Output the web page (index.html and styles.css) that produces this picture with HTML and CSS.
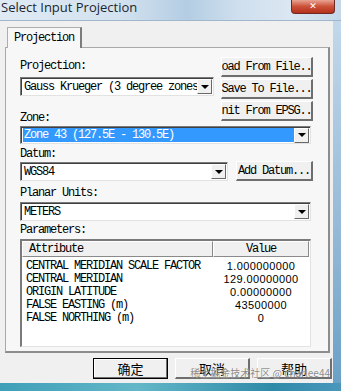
FILE: index.html
```html
<!DOCTYPE html>
<html lang="en">

<head>
    <meta charset="UTF-8">
    <title>Select Input Projection</title>
    <link rel="stylesheet" href="styles.css">
</head>

<body>
    <div class="window">
        <div class="titlebar">
            <span class="title">Select Input Projection</span>
            <span class="close">&#x2715;</span>
        </div>
        <div class="main">
            <div class="client">
                <div class="tabs">
                    <div class="tab">Projection</div>
                </div>
                <div class="panel">
                    <div class="top-row">
                        <div class="top-left">
                            <div class="label">Projection:</div>
                            <div class="combo combo-proj">
                                <span class="combo-text">Gauss Krueger (3 degree zones)</span>
                                <span class="arrow"></span>
                            </div>
                            <div class="label label-zone">Zone:</div>
                        </div>
                        <div class="side-buttons">
                            <button class="btn btn-side">Load From File...</button>
                            <button class="btn btn-side">Save To File...</button>
                            <button class="btn btn-side">Init From EPSG...</button>
                        </div>
                    </div>

                    <div class="combo combo-wide combo-zone">
                        <span class="combo-text selected">Zone 43 (127.5E - 130.5E)</span>
                        <span class="arrow"></span>
                    </div>

                    <div class="label">Datum:</div>
                    <div class="datum-row">
                        <div class="combo combo-datum">
                            <span class="combo-text">WGS84</span>
                            <span class="arrow"></span>
                        </div>
                        <button class="btn btn-datum">Add Datum...</button>
                    </div>

                    <div class="label">Planar Units:</div>
                    <div class="combo combo-wide combo-units">
                        <span class="combo-text">METERS</span>
                        <span class="arrow"></span>
                    </div>

                    <div class="label">Parameters:</div>
                    <div class="listview">
                        <div class="lv-head">
                            <div class="col-attr">Attribute</div>
                            <div class="col-val">Value</div>
                        </div>
                        <div class="lv-row"><div class="col-attr">CENTRAL MERIDIAN SCALE FACTOR</div><div class="col-val num">1.000000000</div></div>
                        <div class="lv-row"><div class="col-attr">CENTRAL MERIDIAN</div><div class="col-val num">129.00000000</div></div>
                        <div class="lv-row"><div class="col-attr">ORIGIN LATITUDE</div><div class="col-val num">0.00000000</div></div>
                        <div class="lv-row"><div class="col-attr">FALSE EASTING (m)</div><div class="col-val num">43500000</div></div>
                        <div class="lv-row"><div class="col-attr">FALSE NORTHING (m)</div><div class="col-val num">0</div></div>
                    </div>
                </div>

                <div class="footer">
                    <button class="btn btn-foot btn-default">确定</button>
                    <button class="btn btn-foot">取消</button>
                    <button class="btn btn-foot">帮助</button>
                    <span class="watermark">稀土掘金技术社区 @ charlee44</span>
                </div>
            </div>
            <div class="frame-right"></div>
        </div>
        <div class="frame-bottom"></div>
    </div>
</body>

</html>
```

FILE: styles.css
```css
body {
    margin: 0;
    background-color: #f0f0f0;
    overflow: hidden;
}

.window {
    width: 341px;
    height: 391px;
    display: flex;
    flex-direction: column;
    font-family: "Liberation Mono", monospace;
    font-size: 12px;
    letter-spacing: -1.2px;
    color: #000;
}

.titlebar {
    height: 21px;
    flex-shrink: 0;
    display: flex;
    align-items: flex-start;
    justify-content: space-between;
    background: linear-gradient(90deg, #dfeaf4 0%, #d3e2ef 35%, #b4cde3 55%, #cfdfee 70%, #dbe7f2 85%, #c4d8ea 100%);
    border-bottom: 1px solid #9fb6cc;
    box-sizing: border-box;
}

.title {
    font-family: "Open Sans", "Liberation Sans", sans-serif;
    font-size: 13px;
    letter-spacing: 0;
    color: #1b2631;
    padding-left: 1px;
    line-height: 15px;
}

.close {
    width: 42px;
    height: 13px;
    margin-right: 6px;
    background: linear-gradient(#e9a493, #cc5139 50%, #b5311c);
    border: 1px solid #6e2a22;
    border-top: none;
    border-radius: 0 0 4px 4px;
    color: #fff;
    font-family: "DejaVu Sans", sans-serif;
    font-size: 9px;
    font-weight: bold;
    letter-spacing: 0;
    text-align: center;
    line-height: 12px;
}

.main {
    flex: 1;
    display: flex;
}

.client {
    width: 333px;
    background-color: #f0f0f0;
    padding: 6px 0 0 5px;
    box-sizing: border-box;
    position: relative;
}

.frame-right {
    flex: 1;
    background: linear-gradient(180deg, #c2d8ea, #93b8d6 60%, #6aa1c6);
}

.frame-bottom {
    height: 8px;
    flex-shrink: 0;
    background: linear-gradient(90deg, #3f9fb8, #63b7c8 40%, #2f8aa8 80%, #4a97bb);
}

.tabs {
    display: flex;
    padding-left: 2px;
    height: 21px;
}

.tab {
    padding: 2px 6px 0 6px;
    background-color: #f7f7f7;
    border: 1px solid #adadad;
    border-bottom: none;
    border-right: 2px solid #7c7c7c;
    height: 21px;
    box-sizing: border-box;
    line-height: 16px;
    position: relative;
    z-index: 1;
}

.panel {
    width: 325px;
    height: 306px;
    margin-top: -1px;
    background-color: #f7f7f7;
    border: 1px solid #a9a9a9;
    border-right: 2px solid #8d8d8d;
    border-bottom: 2px solid #8d8d8d;
    box-sizing: border-box;
    padding: 9px 0 0 14px;
}

.label {
    height: 13px;
    line-height: 13px;
}

.top-row {
    display: flex;
    align-items: flex-start;
    height: 69px;
}

.top-left {
    width: 201px;
    padding-top: 3px;
}

.side-buttons {
    display: flex;
    flex-direction: column;
    gap: 2px;
}

.combo {
    height: 19px;
    background-color: #fff;
    border-top: 1px solid #7a7a7a;
    border-left: 1px solid #7a7a7a;
    border-right: 1px solid #e2e2e2;
    border-bottom: 1px solid #e2e2e2;
    box-shadow: inset 1px 1px 0 #404040;
    box-sizing: border-box;
    display: flex;
    align-items: center;
    padding: 2px 1px 2px 2px;
}

.combo-text {
    flex: 1;
    white-space: nowrap;
    overflow: hidden;
    line-height: 14px;
    height: 14px;
    padding-left: 1px;
}

.combo-text.selected {
    background-color: #3399ff;
    color: #fff;
}

.arrow {
    width: 15px;
    height: 15px;
    flex-shrink: 0;
    background-color: #f0f0f0;
    border-top: 1px solid #fff;
    border-left: 1px solid #fff;
    border-right: 1px solid #696969;
    border-bottom: 1px solid #696969;
    box-sizing: border-box;
    display: flex;
    align-items: center;
    justify-content: center;
}

.arrow::after {
    content: "";
    border-left: 4px solid transparent;
    border-right: 4px solid transparent;
    border-top: 4px solid #000;
}

.combo-proj {
    width: 194px;
    margin-top: 4px;
}

.label-zone {
    margin-top: 16px;
}

.combo-wide {
    width: 291px;
}

.combo-zone {
    height: 18px;
    margin-bottom: 4px;
}

.datum-row {
    display: flex;
    gap: 8px;
    margin-top: 1px;
    margin-bottom: 6px;
}

.combo-datum {
    width: 208px;
}

.combo-units {
    margin-top: 2px;
    margin-bottom: 3px;
}

.btn {
    font-family: "Liberation Mono", monospace;
    font-size: 12px;
    letter-spacing: -1.2px;
    color: #000;
    background-color: #f0f0f0;
    border-top: 1px solid #fff;
    border-left: 1px solid #fff;
    border-right: 2px solid #6e6e6e;
    border-bottom: 2px solid #6e6e6e;
    box-sizing: border-box;
    padding: 0;
    white-space: nowrap;
    overflow: hidden;
    display: flex;
    align-items: center;
    justify-content: center;
}

.btn-side {
    width: 92px;
    height: 20px;
}

.btn-datum {
    width: 77px;
    height: 20px;
    margin-top: -1px;
}

.listview {
    width: 291px;
    height: 108px;
    background-color: #fff;
    border-top: 2px solid #7a7a7a;
    border-left: 2px solid #7a7a7a;
    border-right: 1px solid #e2e2e2;
    border-bottom: 1px solid #e2e2e2;
    box-sizing: border-box;
    margin-top: 2px;
}

.lv-head {
    display: flex;
    height: 16px;
    line-height: 14px;
    margin-bottom: 3px;
}

.lv-head .col-attr,
.lv-head .col-val {
    background-color: #f0f0f0;
    border-right: 1px solid #8a8a8a;
    border-bottom: 1px solid #8a8a8a;
    border-top: 1px solid #fff;
    border-left: 1px solid #fff;
    box-sizing: border-box;
}

.col-attr {
    width: 191px;
    padding-left: 6px;
    box-sizing: border-box;
    white-space: nowrap;
}

.col-val {
    width: 96px;
    text-align: center;
}

.lv-row {
    display: flex;
    height: 13px;
    line-height: 13px;
}

.lv-row .col-attr {
    padding-left: 4px;
}

.num {
    font-family: "Liberation Sans", sans-serif;
    font-size: 11px;
    letter-spacing: 0.4px;
}

.footer {
    display: flex;
    justify-content: flex-end;
    gap: 7px;
    padding-right: 1px;
    margin-top: 5px;
    position: relative;
}

.btn-foot {
    width: 75px;
    height: 21px;
    font-family: "Noto Sans CJK SC", sans-serif;
    font-size: 13px;
    letter-spacing: 0;
}

.btn-default {
    border: 1px solid #000;
    box-shadow: inset -1px -1px 0 #6e6e6e, inset 1px 1px 0 #fff;
}

.watermark {
    position: absolute;
    right: 3px;
    top: 9px;
    font-family: "Noto Sans CJK SC", sans-serif;
    font-size: 10px;
    line-height: 12px;
    letter-spacing: 0;
    color: rgba(110, 110, 110, 0.8);
    text-shadow: 0 0 1px #fff;
}
```
